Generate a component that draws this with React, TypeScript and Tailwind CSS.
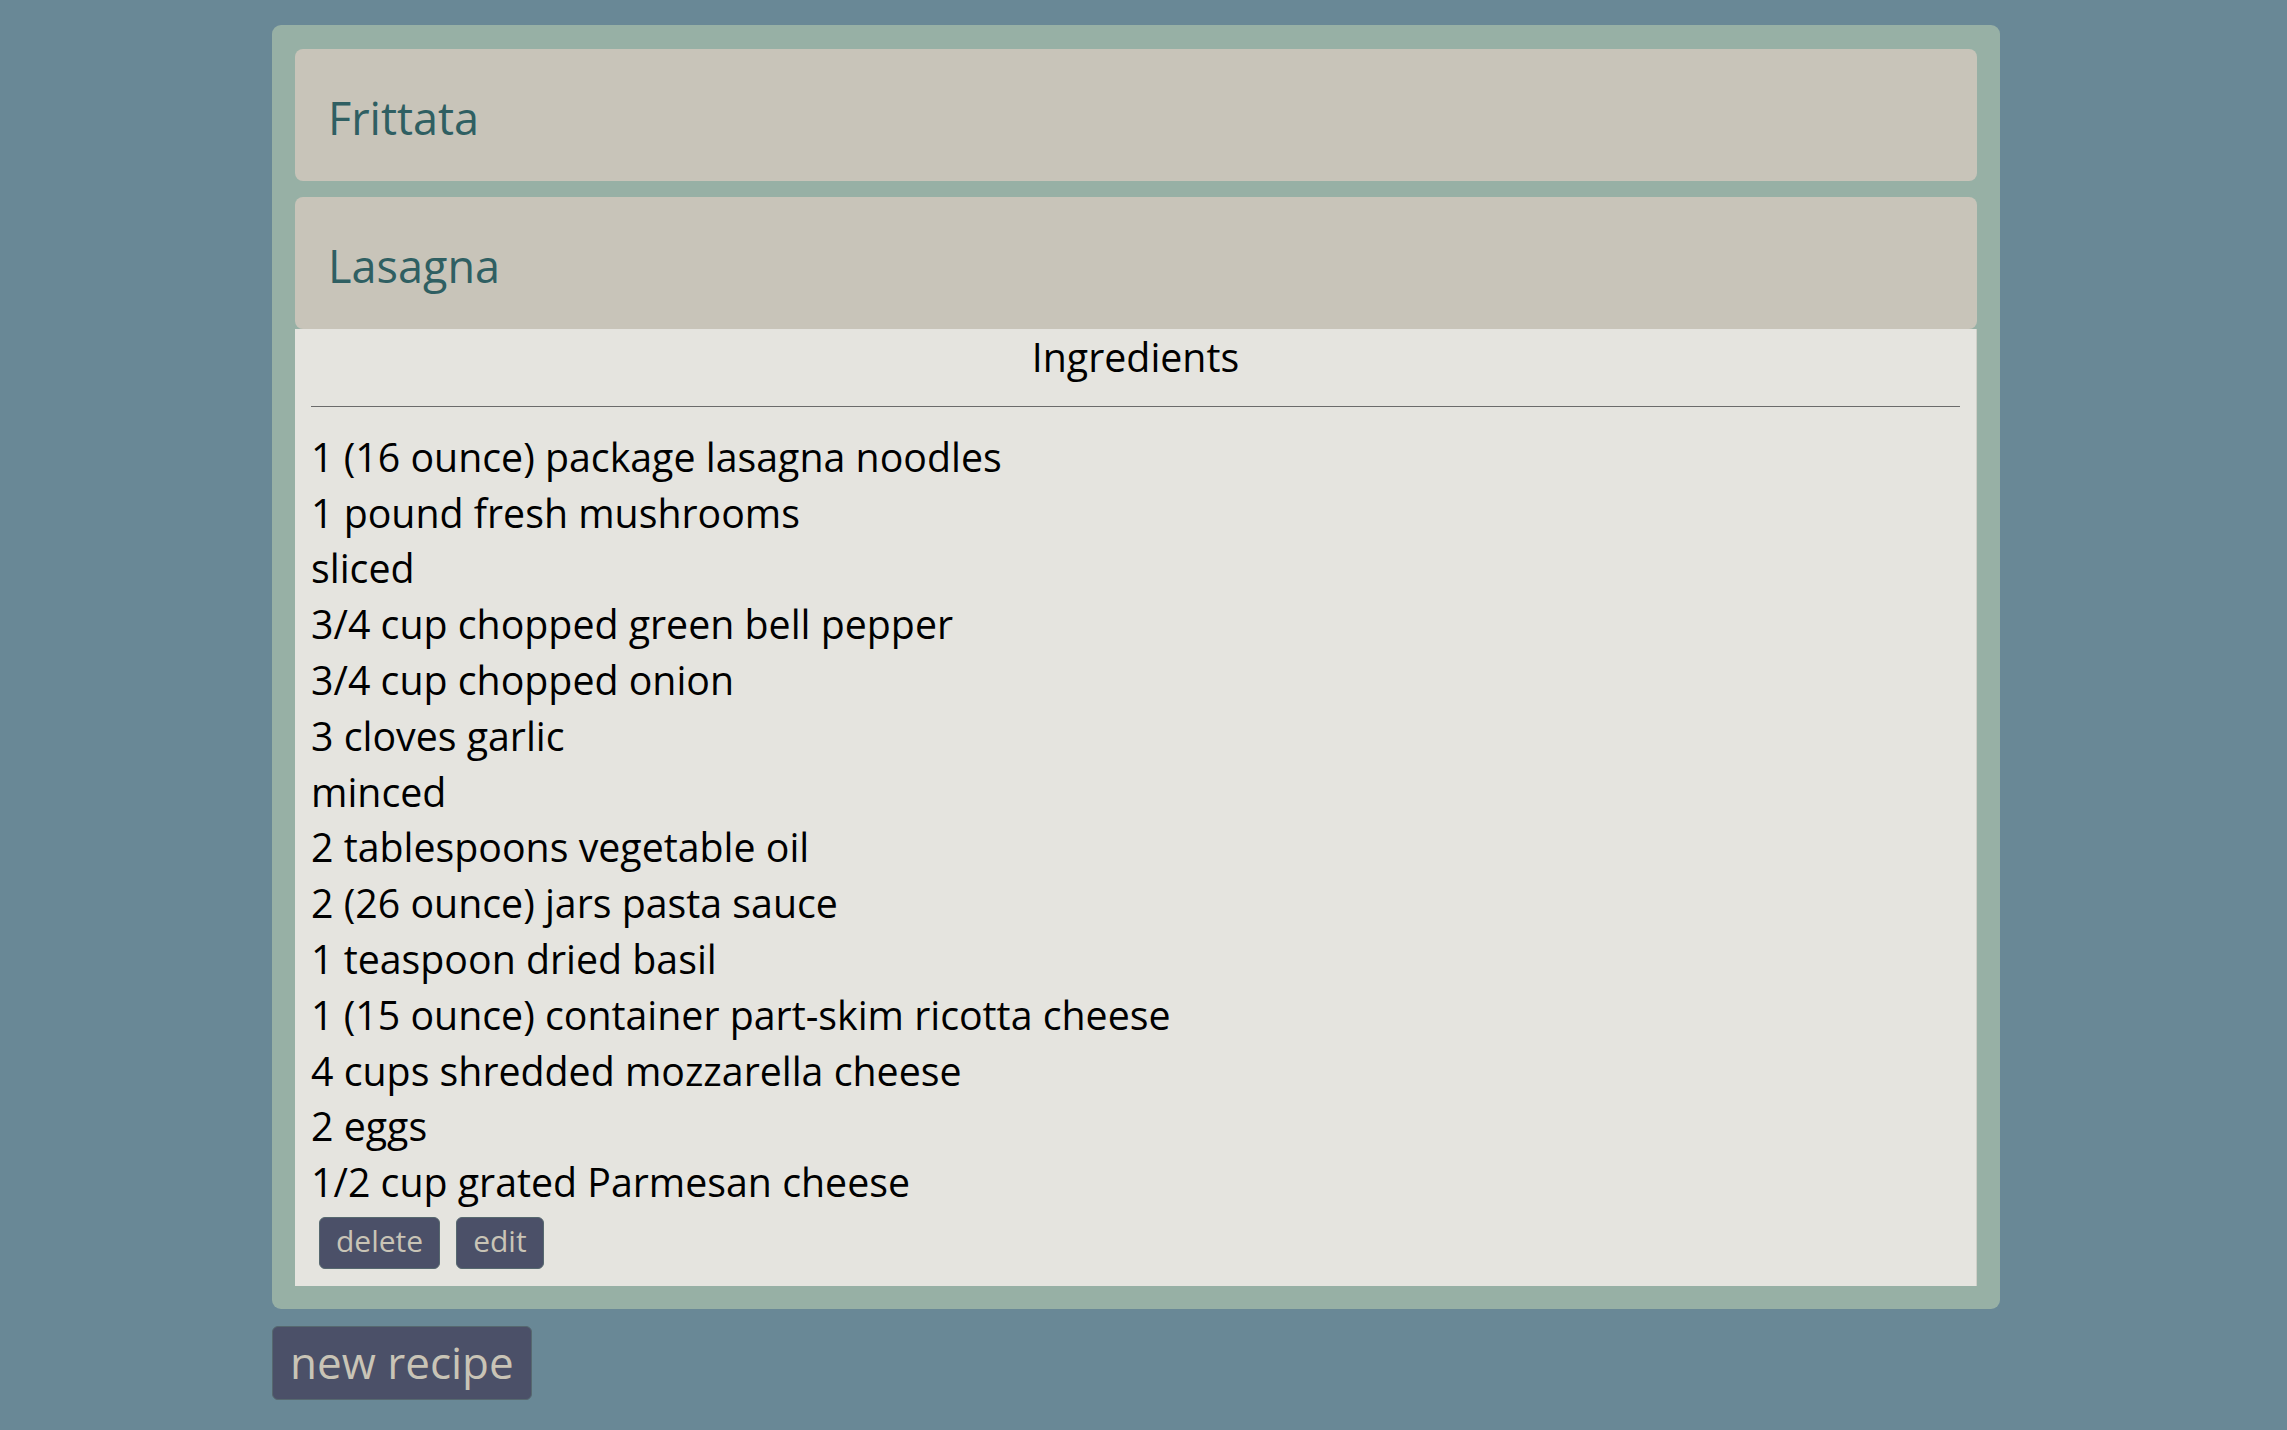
import React, { useState } from "react";

const RECIPES = [
  {
    name: "Frittata",
    ingredients: ["6 eggs", "1/2 cup milk", "1 cup chopped spinach", "1/2 cup shredded cheddar cheese"],
  },
  {
    name: "Lasagna",
    ingredients: [
      "1 (16 ounce) package lasagna noodles",
      "1 pound fresh mushrooms",
      "sliced",
      "3/4 cup chopped green bell pepper",
      "3/4 cup chopped onion",
      "3 cloves garlic",
      "minced",
      "2 tablespoons vegetable oil",
      "2 (26 ounce) jars pasta sauce",
      "1 teaspoon dried basil",
      "1 (15 ounce) container part-skim ricotta cheese",
      "4 cups shredded mozzarella cheese",
      "2 eggs",
      "1/2 cup grated Parmesan cheese",
    ],
  },
];

export default function App() {
  const [open, setOpen] = useState("Lasagna");

  return (
    <div className="min-h-screen w-full bg-[#698896] pt-[25px] font-['Open_Sans',sans-serif]">
      <div className="ml-[272px] w-[1728px]">
        {/* Recipe accordion */}
        <div className="rounded-[9px] bg-[#97b0a5] px-[23px] pt-[24px] pb-[23px]">
          {RECIPES.map((r, i) => (
            <div key={r.name} className={i > 0 ? "mt-[16px]" : ""}>
              <div
                onClick={() => setOpen(open === r.name ? "" : r.name)}
                className="h-[132px] cursor-pointer rounded-[8px] bg-[#c8c4b9] pl-[33px] pt-[46px] text-[45px] leading-[45px] text-[#2f5f62]"
              >
                {r.name}
              </div>
              {open === r.name && (
                <div className="border-r border-[#cfcfc8] bg-[#e5e4df] px-[16px] pt-[1px] pb-[17px] text-[39.3px] leading-[55.8px] text-black">
                  <div className="text-center">Ingredients</div>
                  <hr className="mt-[20px] border-0 border-t border-[#6b6b6b]" />
                  <ul className="mt-[23px]">
                    {r.ingredients.map((ing, j) => (
                      <li key={j}>{ing}</li>
                    ))}
                  </ul>
                  <div className="mt-[6px] ml-[8px] flex gap-[16px]">
                    <button className="flex h-[52px] items-center rounded-[6px] border border-[#56686f] bg-[#4b5068] px-[16px] pb-[4px] text-[30px] text-[#c9c4b6]">
                      delete
                    </button>
                    <button className="flex h-[52px] items-center rounded-[6px] border border-[#56686f] bg-[#4b5068] px-[16px] pb-[4px] text-[30px] text-[#c9c4b6]">
                      edit
                    </button>
                  </div>
                </div>
              )}
            </div>
          ))}
        </div>

        <button className="mt-[17px] flex h-[74px] items-center rounded-[6px] border border-[#56686f] bg-[#4b5068] px-[17px] pb-[2px] text-[44px] text-[#c9c4b6]">
          new recipe
        </button>
      </div>
    </div>
  );
}
